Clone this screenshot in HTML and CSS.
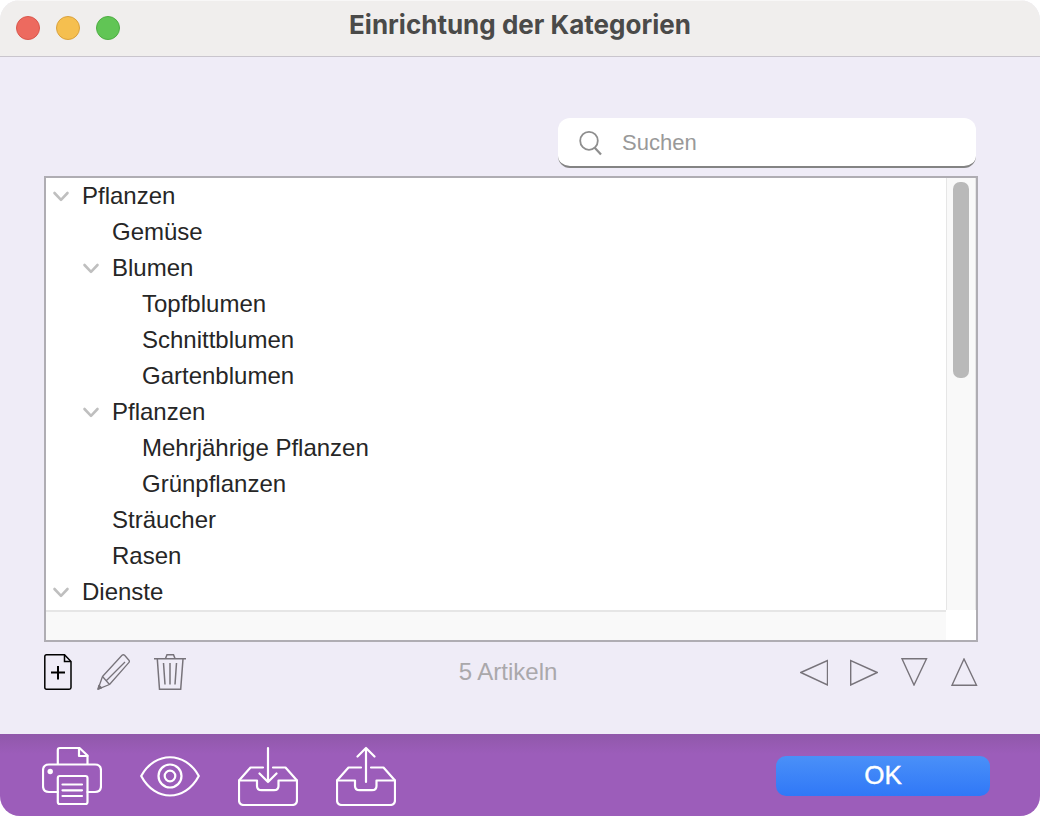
FILE: index.html
```html
<!DOCTYPE html>
<html lang="de">
<head>
    <meta charset="UTF-8">
    <meta name="viewport" content="width=device-width, initial-scale=1.0">
    <title>Einrichtung der Kategorien</title>
    <link rel="stylesheet" href="styles.css">
</head>
<body>
    <div class="window">
        <header class="titlebar">
            <div class="lights">
                <button class="light close" aria-label="Schließen"></button>
                <button class="light minimize" aria-label="Minimieren"></button>
                <button class="light maximize" aria-label="Maximieren"></button>
            </div>
            <h1>Einrichtung der Kategorien</h1>
        </header>

        <main class="content">
            <label class="search">
                <svg width="24" height="26" viewBox="0 0 24 26" fill="none" stroke="#8e8e8e" stroke-width="1.800">
                    <ellipse cx="11" cy="10.800" rx="8.800" ry="9"/>
                    <path d="M16.500 17.500L23 24.500" stroke-width="2.200"/>
                </svg>
                <input type="search" placeholder="Suchen" aria-label="Suchen">
            </label>

            <div class="tree">
                <ul class="rows">
                    <li><button class="toggle" aria-label="Pflanzen zuklappen"><svg width="18" height="12" viewBox="0 0 18 12"><path d="M2.500 3L9 9.800L15.500 3"/></svg></button>Pflanzen</li>
                    <li class="level-2">Gemüse</li>
                    <li class="level-2"><button class="toggle" aria-label="Blumen zuklappen"><svg width="18" height="12" viewBox="0 0 18 12"><path d="M2.500 3L9 9.800L15.500 3"/></svg></button>Blumen</li>
                    <li class="level-3">Topfblumen</li>
                    <li class="level-3">Schnittblumen</li>
                    <li class="level-3">Gartenblumen</li>
                    <li class="level-2"><button class="toggle" aria-label="Pflanzen zuklappen"><svg width="18" height="12" viewBox="0 0 18 12"><path d="M2.500 3L9 9.800L15.500 3"/></svg></button>Pflanzen</li>
                    <li class="level-3">Mehrjährige Pflanzen</li>
                    <li class="level-3">Grünpflanzen</li>
                    <li class="level-2">Sträucher</li>
                    <li class="level-2">Rasen</li>
                    <li><button class="toggle" aria-label="Dienste zuklappen"><svg width="18" height="12" viewBox="0 0 18 12"><path d="M2.500 3L9 9.800L15.500 3"/></svg></button>Dienste</li>
                </ul>
                <div class="scroll-y"><div class="thumb"></div></div>
                <div class="scroll-x"></div>
            </div>

            <div class="toolbar">
                <div class="tools">
                    <button aria-label="Neu">
                        <svg width="28" height="36" viewBox="0 0 28 36" fill="none" stroke="#000" stroke-width="1.500">
                            <path d="M2.500 .8H20.500L27 7.500V33.500Q27 35.200 25.300 35.200H2.500Q.8 35.200 .8 33.500V2.500Q.8 .8 2.500 .8Z"/>
                            <path d="M20.500 .8V7.500H27"/>
                            <path d="M7 18.500H21M14 12V25.500" stroke-width="2"/>
                        </svg>
                    </button>
                    <button aria-label="Bearbeiten">
                        <svg width="34" height="36" viewBox="0 0 34 36" fill="none" stroke="#77737a" stroke-width="1.300" stroke-linejoin="round">
                            <path d="M6.500 22.500L26 1.300Q27.300 .2 28.600 1.300L32.900 6.200Q33.900 7.400 32.800 8.600L13.500 30.500L2 35.200Z"/>
                            <path d="M6.500 22.500L13.500 30.500M10.500 26.500L29 8"/>
                            <path d="M2 35.200L2.900 31.300L5.500 33.800Z" fill="#77737a"/>
                        </svg>
                    </button>
                    <button aria-label="Löschen">
                        <svg width="32" height="36" viewBox="0 0 32 36" fill="none" stroke="#77737a" stroke-width="1.500">
                            <path d="M0 4.700H32M11.500 4.500L13 .8H19.500L21 4.500M3.300 5L5.500 35.200H26.700L29 5"/>
                            <path d="M9.500 9L11 30.500M16 9V30.500M22.500 9L21 30.500"/>
                        </svg>
                    </button>
                </div>
                <span class="count">5 Artikeln</span>
                <div class="arrows">
                    <button aria-label="Nach links"><svg width="28" height="28" viewBox="0 0 28 28"><path d="M.8 14.500L27.500 2.500V27Z"/></svg></button>
                    <button aria-label="Nach rechts"><svg width="28" height="28" viewBox="0 0 28 28"><path d="M27.200 14.500L.7 2.500V27Z"/></svg></button>
                    <button aria-label="Nach unten"><svg width="28" height="28" viewBox="0 0 28 28"><path d="M14 27L2 .7H26.500Z"/></svg></button>
                    <button aria-label="Nach oben"><svg width="28" height="28" viewBox="0 0 28 28"><path d="M14 1L2 27.300H26.500Z"/></svg></button>
                </div>
            </div>
        </main>

        <footer class="footer">
            <div class="actions">
                <button aria-label="Drucken">
                    <svg width="60" height="60" viewBox="0 0 60 60">
                        <path d="M15.800 18V4Q15.800 2 17.800 2H37.500L45.500 9.500V18"/>
                        <path d="M37 2V10H45.500"/>
                        <path d="M15.800 46H7Q1 46 1 40V24.500Q1 18.500 7 18.500H53Q59 18.500 59 24.500V40Q59 46 53 46H45.500"/>
                        <rect x="15.800" y="30" width="29.700" height="28" rx="2"/>
                        <path d="M20.500 38.500H40M20.500 44.300H40M20.500 50H40"/>
                        <circle cx="8.200" cy="25.500" r="2.700" fill="#fff" stroke="none"/>
                    </svg>
                </button>
                <button aria-label="Vorschau">
                    <svg width="60" height="60" viewBox="0 0 60 60">
                        <path d="M1.200 30C15 5 45 5 58.800 30C45 56 15 56 1.200 30Z"/>
                        <circle cx="30" cy="30" r="11.500"/>
                        <circle cx="30" cy="30" r="5.300"/>
                    </svg>
                </button>
                <button aria-label="Importieren">
                    <svg width="60" height="60" viewBox="0 0 60 60">
                        <path d="M25 21.500H12.500L1 34.500V54Q1 59 6 59H54Q59 59 59 54V34.500L47.500 21.500H35"/>
                        <path d="M1 34.500H19V40Q19 44.200 23.500 44.200H36Q40.500 44.200 40.500 40V34.500H59"/>
                        <path d="M30 2V36M21.500 27.500L30 36L38.500 27.500"/>
                    </svg>
                </button>
                <button aria-label="Exportieren">
                    <svg width="60" height="60" viewBox="0 0 60 60">
                        <path d="M25 21.500H12.500L1 34.500V54Q1 59 6 59H54Q59 59 59 54V34.500L47.500 21.500H35"/>
                        <path d="M1 34.500H19V40Q19 44.200 23.500 44.200H36Q40.500 44.200 40.500 40V34.500H59"/>
                        <path d="M30 36V2M21.500 10.500L30 2L38.500 10.500"/>
                    </svg>
                </button>
            </div>
            <button class="ok-btn">OK</button>
        </footer>
    </div>
</body>
</html>
```
FILE: styles.css
```css
* {
    box-sizing: border-box;
}

body {
    margin: 0;
    background: white;
    font-family: 'Liberation Sans', Arial, sans-serif;
    font-size: 24px;
    color: #262626;
}

button {
    padding: 0;
    border: none;
    background: none;
    font-family: inherit;
    cursor: pointer;
}

svg {
    display: block;
}

.window {
    display: flex;
    flex-direction: column;
    min-height: 100vh;
    background: #efecf7;
    border-radius: 20px;
    overflow: hidden;
}

.titlebar {
    display: grid;
    grid-template-columns: 1fr auto 1fr;
    height: 57px;
    padding: 0 16px 2px;
    background: #f0eeed;
    border-top: 1px solid #f8f7f7;
    border-bottom: 1px solid #c9c5cd;
}

.titlebar h1 {
    margin: 0;
    font-family: Inter, sans-serif;
    font-size: 26px;
    line-height: 48px;
    color: #4a4a49;
}

.lights {
    display: flex;
    align-items: center;
    gap: 16px;
}

.light {
    width: 24px;
    height: 24px;
    border-radius: 50%;
}

.close {
    background: #ed6a5f;
    border: 1px solid #d9574d;
}

.minimize {
    background: #f5bf4f;
    border: 1px solid #d9a13d;
}

.maximize {
    background: #61c555;
    border: 1px solid #4ead43;
}

.content {
    flex: 1;
    display: flex;
    flex-direction: column;
    padding: 61px 62px 44px 44px;
}

.search {
    align-self: flex-end;
    display: flex;
    align-items: center;
    gap: 20px;
    width: 418px;
    height: 50px;
    margin: 0 2px 8px;
    padding: 2px 20px 0;
    background: white;
    border-bottom: 2px solid #838383;
    border-radius: 12px;
}

.search input {
    flex: 1;
    min-width: 0;
    padding: 0;
    border: none;
    outline: none;
    background: none;
    font-family: inherit;
    font-size: 22px;
}

.search input::placeholder {
    color: #999;
}

.tree {
    flex: 1;
    display: grid;
    grid-template-columns: 1fr 30px;
    grid-template-rows: 1fr 30px;
    background: white;
    border: 2px solid #afadb3;
}

.rows {
    margin: 0;
    padding: 0;
    list-style: none;
}

.rows li {
    display: flex;
    align-items: center;
    height: 36px;
    padding-left: 36px;
}

.rows .level-2 {
    padding-left: 66px;
}

.rows .level-3 {
    padding-left: 96px;
}

.toggle {
    width: 30px;
    margin-left: -30px;
}

.toggle path {
    fill: none;
    stroke: #bfbfbf;
    stroke-width: 2.6;
    stroke-linecap: round;
    stroke-linejoin: round;
}

.scroll-y {
    padding: 4px 6px;
    background: #f9f9f9;
    border: 1px solid #e6e6e6;
    border-top: none;
    border-bottom: none;
}

.thumb {
    width: 16px;
    height: 196px;
    background: #b9b9b9;
    border-radius: 7px;
}

.scroll-x {
    background: #f9f9f9;
    border-top: 2px solid #e6e6e6;
}

.toolbar {
    display: grid;
    grid-template-columns: 1fr auto 1fr;
    align-items: center;
    margin-top: 12px;
}

.tools {
    display: flex;
    gap: 24px;
}

.count {
    padding-right: 6px;
    line-height: 36px;
    color: #aaa8ab;
}

.arrows {
    display: flex;
    justify-content: flex-end;
    gap: 22px;
}

.arrows path {
    fill: none;
    stroke: #77737a;
    stroke-width: 1.4;
}

.footer {
    display: flex;
    justify-content: space-between;
    align-items: center;
    height: 82px;
    padding: 2px 50px 0 42px;
    background: linear-gradient(#9058aa, #9c5dba 20px);
}

.actions {
    display: flex;
    gap: 38px;
}

.actions svg {
    fill: none;
    stroke: white;
    stroke-width: 2.2;
    stroke-linecap: round;
    stroke-linejoin: round;
}

.ok-btn {
    width: 214px;
    height: 40px;
    padding-bottom: 2px;
    border-radius: 10px;
    background: linear-gradient(#4a90f8, #3078f7);
    color: white;
    font-size: 26px;
    -webkit-text-stroke: 0.4px white;
}
```
